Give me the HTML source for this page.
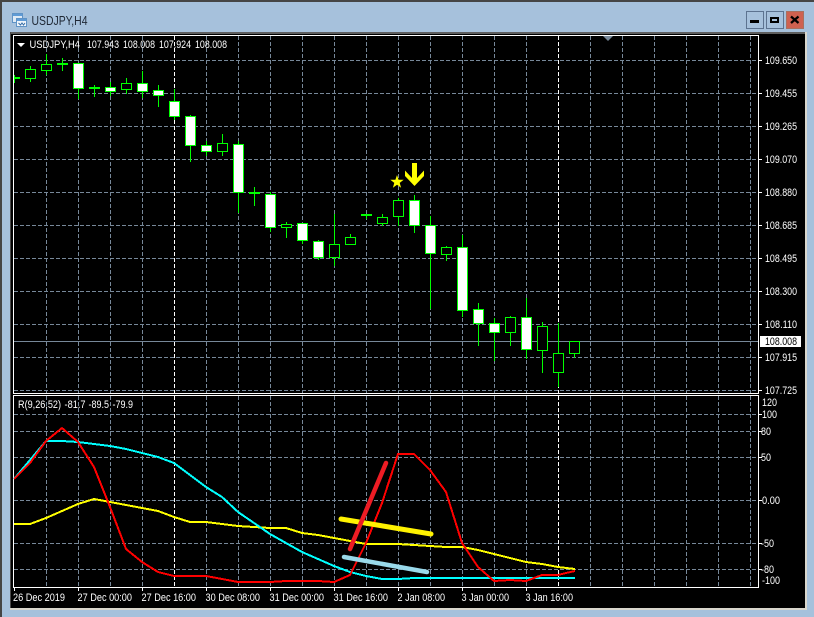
<!DOCTYPE html>
<html>
<head>
<meta charset="utf-8">
<title>USDJPY,H4</title>
<style>
html,body{margin:0;padding:0;background:#a6c1dc;width:814px;height:617px;overflow:hidden}
svg{display:block}
text{font-family:"Liberation Sans",sans-serif;font-size:11px;fill:#fff}
.g{stroke:#778899;stroke-width:1;stroke-dasharray:4 2;fill:none}
.w{stroke:#fff;stroke-width:1;stroke-dasharray:4 2;fill:none}
.f{fill:#fff;stroke:#0f0;stroke-width:1}
.h{fill:#000;stroke:#0f0;stroke-width:1}
</style>
</head>
<body>
<svg width="814" height="617" viewBox="0 0 814 617" xmlns="http://www.w3.org/2000/svg">
<rect width="814" height="617" fill="#a6c1dc"/>
<rect width="814" height="2" fill="#454545"/>
<rect width="2" height="617" fill="#454545"/>

<!-- title icon -->
<g shape-rendering="crispEdges">
<rect x="12.5" y="13.5" width="10" height="9" fill="#dfeaf5" stroke="#5f93c6"/>
<rect x="13" y="14" width="9" height="2" fill="#5f9bd6"/>
<rect x="16.5" y="18.5" width="10" height="8" fill="#eef4fa" stroke="#5f93c6"/>
<rect x="17" y="19" width="9" height="2" fill="#5f9bd6"/>
</g>
<path d="M18.5 23l2 2 1.500-2 1.500 2 1.500-2" fill="none" stroke="#3a70a8" stroke-width="1"/>
<text x="31.500" y="25" style="font-size:13px;fill:#1f2835" textLength="56" lengthAdjust="spacingAndGlyphs">USDJPY,H4</text>

<!-- buttons -->
<g shape-rendering="crispEdges">
<rect x="746.500" y="11.500" width="17" height="17" fill="#a6c1dc" stroke="#5c7390"/>
<rect x="750" y="20" width="9" height="3" fill="#000"/>
<rect x="766.500" y="11.500" width="17" height="17" fill="#a6c1dc" stroke="#5c7390"/>
<rect x="771" y="18" width="7" height="4" fill="none" stroke="#000" stroke-width="2"/>
<rect x="786.500" y="11.500" width="17" height="17" fill="#cf6150" stroke="#a8705f"/>
</g>
<path d="M791 16.500L798.500 23M798.500 16.500L791 23" stroke="#000" stroke-width="2.300" fill="none"/>

<!-- client area -->
<g shape-rendering="crispEdges">
<rect x="10" y="32" width="797" height="578" fill="#d9d6cc"/>
<rect x="10" y="32" width="795" height="576" fill="#000"/>
<rect x="10" y="32" width="795" height="2" fill="#5e5e5e"/>
<rect x="10" y="32" width="1" height="576" fill="#4a4a4a"/>

<!-- grid -->
<path class="g" d="M46.500 36V393M78.500 36V393M110.500 36V393M142.500 36V393M206.500 36V393M238.500 36V393M270.500 36V393M302.500 36V393M334.500 36V393M366.500 36V393M398.500 36V393M430.500 36V393M462.500 36V393M494.500 36V393M526.500 36V393M590.500 36V393M622.500 36V393M654.500 36V393M686.500 36V393M718.500 36V393M750.500 36V393"/>
<path class="w" d="M174.500 36V393M558.500 36V393"/>
<path class="g" d="M14 60.500H758M14 93.500H758M14 126.500H758M14 159.500H758M14 192.500H758M14 225.500H758M14 258.500H758M14 291.500H758M14 324.500H758M14 357.500H758M14 390.500H758"/>
<path class="g" d="M46.500 396V587M78.500 396V587M110.500 396V587M142.500 396V587M206.500 396V587M238.500 396V587M270.500 396V587M302.500 396V587M334.500 396V587M366.500 396V587M398.500 396V587M430.500 396V587M462.500 396V587M494.500 396V587M526.500 396V587M590.500 396V587M622.500 396V587M654.500 396V587M686.500 396V587M718.500 396V587M750.500 396V587"/>
<path class="w" d="M174.500 396V587M558.500 396V587"/>
<path class="g" d="M14 414.500H758M14 431.500H758M14 457.500H758M14 500.500H758M14 543.500H758M14 569.500H758"/>
<!-- price line -->
<rect x="14" y="341" width="745" height="1" fill="#778899"/>

<!-- wicks -->
<path stroke="#0f0" stroke-width="1" fill="none" d="M14.500 75V83M30.500 66V82M46.500 54V75M62.500 58V71M78.500 63V99M94.500 85V97M110.500 82V96M126.500 78V94M142.500 71V98M158.500 85V107M174.500 89V120M190.500 115V162M206.500 141V156M222.500 134V156M238.500 141V213M254.500 187V206M270.500 192V232M286.500 222V238M302.500 223V244M318.500 240V260M334.500 214V266M350.500 234V245M366.500 215V219M382.500 214V226M398.500 198V226M414.500 195V233M430.500 216V309M446.500 246V261M462.500 235V317M478.500 303V346M494.500 318V361M510.500 316V346M526.500 298V359M542.500 322V373M558.500 323V387M574.500 341V358"/>
<!-- dojis -->
<g fill="#0f0">
<rect x="14" y="77" width="6" height="2"/>
<rect x="57" y="63" width="11" height="2"/>
<rect x="89" y="87" width="11" height="2"/>
<rect x="249" y="192" width="11" height="2"/>
<rect x="361" y="214" width="11" height="2"/>
</g>
<!-- bodies: hollow -->
<rect class="h" x="25.500" y="69.500" width="10" height="9"/>
<rect class="h" x="41.500" y="64.500" width="10" height="6"/>
<rect class="h" x="121.500" y="83.500" width="10" height="6"/>
<rect class="h" x="217.500" y="143.500" width="10" height="8"/>
<rect class="h" x="281.500" y="224.500" width="10" height="3"/>
<rect class="h" x="329.500" y="244.500" width="10" height="13"/>
<rect class="h" x="345.500" y="237.500" width="10" height="7"/>
<rect class="h" x="377.500" y="217.500" width="10" height="6"/>
<rect class="h" x="393.500" y="200.500" width="10" height="16"/>
<rect class="h" x="441.500" y="247.500" width="10" height="7"/>
<rect class="h" x="505.500" y="317.500" width="10" height="15"/>
<rect class="h" x="537.500" y="326.500" width="10" height="24"/>
<rect class="h" x="553.500" y="353.500" width="10" height="19"/>
<rect class="h" x="569.500" y="341.500" width="10" height="12"/>
<!-- bodies: filled -->
<rect class="f" x="73.500" y="63.500" width="10" height="25"/>
<rect class="f" x="105.500" y="87.500" width="10" height="4"/>
<rect class="f" x="137.500" y="83.500" width="10" height="8"/>
<rect class="f" x="153.500" y="90.500" width="10" height="5"/>
<rect class="f" x="169.500" y="101.500" width="10" height="15"/>
<rect class="f" x="185.500" y="116.500" width="10" height="29"/>
<rect class="f" x="201.500" y="145.500" width="10" height="6"/>
<rect class="f" x="233.500" y="144.500" width="10" height="48"/>
<rect class="f" x="265.500" y="194.500" width="10" height="33"/>
<rect class="f" x="297.500" y="223.500" width="10" height="17"/>
<rect class="f" x="313.500" y="241.500" width="10" height="16"/>
<rect class="f" x="409.500" y="200.500" width="10" height="25"/>
<rect class="f" x="425.500" y="225.500" width="10" height="28"/>
<rect class="f" x="457.500" y="247.500" width="10" height="63"/>
<rect class="f" x="473.500" y="309.500" width="10" height="14"/>
<rect class="f" x="489.500" y="323.500" width="10" height="9"/>
<rect class="f" x="521.500" y="317.500" width="10" height="32"/>

<!-- frames -->
<g fill="#fff">
<rect x="13" y="35" width="746" height="1"/>
<rect x="13" y="393" width="746" height="1"/>
<rect x="13" y="395" width="746" height="1"/>
<rect x="13" y="587" width="746" height="1"/>
<rect x="13" y="35" width="1" height="359"/>
<rect x="13" y="395" width="1" height="193"/>
<rect x="758" y="35" width="1" height="359"/>
<rect x="758" y="395" width="1" height="193"/>
<!-- right ticks -->
<rect x="759" y="60" width="3" height="1"/><rect x="759" y="93" width="3" height="1"/><rect x="759" y="126" width="3" height="1"/><rect x="759" y="159" width="3" height="1"/><rect x="759" y="192" width="3" height="1"/><rect x="759" y="225" width="3" height="1"/><rect x="759" y="258" width="3" height="1"/><rect x="759" y="291" width="3" height="1"/><rect x="759" y="324" width="3" height="1"/><rect x="759" y="357" width="3" height="1"/><rect x="759" y="390" width="3" height="1"/>
<rect x="759" y="414" width="3" height="1"/><rect x="759" y="431" width="3" height="1"/><rect x="759" y="457" width="3" height="1"/><rect x="759" y="500" width="3" height="1"/><rect x="759" y="543" width="3" height="1"/><rect x="759" y="569" width="3" height="1"/>
<!-- bottom ticks -->
<rect x="14" y="588" width="1" height="3"/><rect x="78" y="588" width="1" height="3"/><rect x="142" y="588" width="1" height="3"/><rect x="206" y="588" width="1" height="3"/><rect x="270" y="588" width="1" height="3"/><rect x="334" y="588" width="1" height="3"/><rect x="398" y="588" width="1" height="3"/><rect x="462" y="588" width="1" height="3"/><rect x="526" y="588" width="1" height="3"/>
<!-- price tag -->
<rect x="760" y="336" width="41" height="11"/>
</g>

<!-- indicator lines -->
<polyline fill="none" stroke="#ffff00" stroke-width="2" points="14,524 30,524 46,518 62,511 78,504 94,499 110,502 126,505 142,508 158,511 174,517 190,522 206,522 222,524 238,526 254,527 270,528 286,528 302,533 318,535 334,538 350,541 366,544 382,544 398,544 414,545 430,546 446,547 462,547 478,550 494,554 510,558 526,562 542,564 558,567 575,569"/>
<polyline fill="none" stroke="#00ffff" stroke-width="2" points="14,479 30,460 46,441 62,441 78,442 94,444 110,446 126,449 142,453 158,457 174,463 190,475 206,487 222,497 238,512 254,523 270,534 286,543 302,552 318,559 334,566 350,572 366,576 382,579 398,579 414,578 430,578 575,578"/>
<polyline fill="none" stroke="#ff0000" stroke-width="2" points="14,479 30,463 46,441 62,428 78,442 94,467 110,507 126,549 142,562 158,572 174,576 190,576 206,576 222,579 238,582 254,582 270,582 286,581 302,581 318,581 334,582 350,575 366,543 382,503 398,454 414,454 430,470 446,492 462,543 478,567 494,581 510,580 526,581 542,575 558,575 566,573 575,571"/>
</g>

<!-- hand-drawn -->
<path d="M344 557L427 572" stroke="#99d9ea" stroke-width="4.500" stroke-linecap="round" fill="none"/>
<path d="M341 519L431 534" stroke="#fff200" stroke-width="5" stroke-linecap="round" fill="none"/>
<path d="M386 463L350 549" stroke="#ed1c24" stroke-width="4.500" stroke-linecap="round" fill="none"/>

<!-- arrow & star -->
<polygon fill="#ffff00" points="412,163 417,163 417,178 424,170.500 424,176 414.500,186 405,176 405,170.500 412,178"/>
<polygon fill="#ffff00" points="397,175 398.600,179.700 403.700,179.800 399.700,182.900 401.100,187.700 397,184.800 392.900,187.700 394.300,182.900 390.300,179.800 395.400,179.700"/>

<!-- small triangles -->
<polygon fill="#fff" points="17,43 25,43 21,47"/>
<polygon fill="#778899" points="603,36 613,36 608,41"/>

<!-- chart label -->
<text x="29.500" y="48" textLength="50.500" lengthAdjust="spacingAndGlyphs">USDJPY,H4</text>
<text x="87" y="48" textLength="32" lengthAdjust="spacingAndGlyphs">107.943</text>
<text x="123" y="48" textLength="32" lengthAdjust="spacingAndGlyphs">108.008</text>
<text x="159" y="48" textLength="32" lengthAdjust="spacingAndGlyphs">107.924</text>
<text x="195" y="48" textLength="32" lengthAdjust="spacingAndGlyphs">108.008</text>

<!-- price axis -->
<text x="765" y="64" textLength="32" lengthAdjust="spacingAndGlyphs">109.650</text>
<text x="765" y="97" textLength="32" lengthAdjust="spacingAndGlyphs">109.455</text>
<text x="765" y="130" textLength="32" lengthAdjust="spacingAndGlyphs">109.265</text>
<text x="765" y="163" textLength="32" lengthAdjust="spacingAndGlyphs">109.070</text>
<text x="765" y="196" textLength="32" lengthAdjust="spacingAndGlyphs">108.880</text>
<text x="765" y="229" textLength="32" lengthAdjust="spacingAndGlyphs">108.685</text>
<text x="765" y="262" textLength="32" lengthAdjust="spacingAndGlyphs">108.495</text>
<text x="765" y="295" textLength="32" lengthAdjust="spacingAndGlyphs">108.300</text>
<text x="765" y="328" textLength="32" lengthAdjust="spacingAndGlyphs">108.110</text>
<text x="765" y="345" textLength="32" lengthAdjust="spacingAndGlyphs" style="fill:#000">108.008</text>
<text x="765" y="361" textLength="32" lengthAdjust="spacingAndGlyphs">107.915</text>
<text x="765" y="394" textLength="32" lengthAdjust="spacingAndGlyphs">107.725</text>

<!-- indicator label -->
<text x="18" y="408" textLength="43" lengthAdjust="spacingAndGlyphs">R(9,26,52)</text>
<text x="64.500" y="408" textLength="21" lengthAdjust="spacingAndGlyphs">-81.7</text>
<text x="88.500" y="408" textLength="20.500" lengthAdjust="spacingAndGlyphs">-89.5</text>
<text x="112.500" y="408" textLength="20.500" lengthAdjust="spacingAndGlyphs">-79.9</text>

<!-- indicator axis -->
<text x="762" y="406" textLength="15" lengthAdjust="spacingAndGlyphs">120</text>
<text x="762" y="418" textLength="15" lengthAdjust="spacingAndGlyphs">100</text>
<text x="761" y="435" textLength="10" lengthAdjust="spacingAndGlyphs">80</text>
<text x="761" y="461" textLength="10" lengthAdjust="spacingAndGlyphs">50</text>
<text x="762" y="504" textLength="18" lengthAdjust="spacingAndGlyphs">0.00</text>
<text x="761" y="547" textLength="13" lengthAdjust="spacingAndGlyphs">-50</text>
<text x="761" y="573" textLength="13" lengthAdjust="spacingAndGlyphs">-80</text>
<text x="762" y="584" textLength="18" lengthAdjust="spacingAndGlyphs">-100</text>

<!-- time axis -->
<text x="13" y="601" textLength="52" lengthAdjust="spacingAndGlyphs">26 Dec 2019</text>
<text x="77.500" y="601" textLength="54.500" lengthAdjust="spacingAndGlyphs">27 Dec 00:00</text>
<text x="141.500" y="601" textLength="54.500" lengthAdjust="spacingAndGlyphs">27 Dec 16:00</text>
<text x="205.500" y="601" textLength="54.500" lengthAdjust="spacingAndGlyphs">30 Dec 08:00</text>
<text x="269.500" y="601" textLength="54.500" lengthAdjust="spacingAndGlyphs">31 Dec 00:00</text>
<text x="333.500" y="601" textLength="54.500" lengthAdjust="spacingAndGlyphs">31 Dec 16:00</text>
<text x="397.500" y="601" textLength="47.500" lengthAdjust="spacingAndGlyphs">2 Jan 08:00</text>
<text x="461.500" y="601" textLength="47.500" lengthAdjust="spacingAndGlyphs">3 Jan 00:00</text>
<text x="525.500" y="601" textLength="47.500" lengthAdjust="spacingAndGlyphs">3 Jan 16:00</text>
</svg>
</body>
</html>
